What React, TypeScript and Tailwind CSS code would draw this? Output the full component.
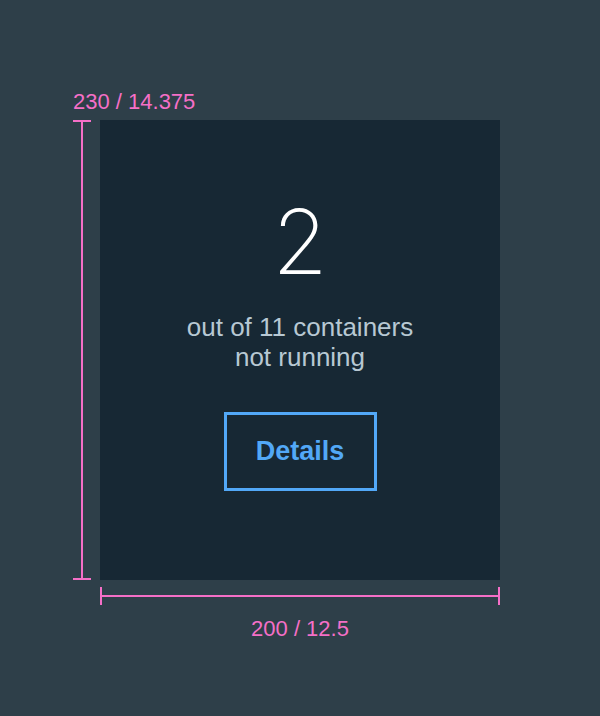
export default function App() {
  return (
    <div className="w-[600px] h-[716px] bg-[#2e3f49] flex flex-col pl-[73px] pt-[89px]" style={{ fontFamily: '"Liberation Sans", Arial, sans-serif' }}>
      <div className="text-[22px] leading-[26px] text-[#f56fc7]">230 / 14.375</div>
      <div className="flex mt-[5px]">
        {/* vertical dimension */}
        <div className="w-[18px] h-[460px] flex flex-col items-center">
          <div className="w-[18px] h-[2px] bg-[#f56fc7]" />
          <div className="w-[2px] flex-1 bg-[#f56fc7]" />
          <div className="w-[18px] h-[2px] bg-[#f56fc7]" />
        </div>
        <div className="ml-[9px] flex flex-col">
          <div className="w-[400px] h-[460px] bg-[#172834] flex flex-col items-center">
            <div className="mt-[77px] text-[90px] leading-[90px] text-white" style={{ fontFamily: 'Inter, sans-serif', fontWeight: 250 }}>2</div>
            <div className="mt-[25px] text-[26px] leading-[30px] text-[#b7c8d3] text-center">
              out of 11 containers
              <br />
              not running
            </div>
            <div className="mt-[40px] w-[153px] h-[79px] border-[3px] border-[#52a8f7] flex items-center justify-center text-[27px] font-bold text-[#52a8f7]">
              Details
            </div>
          </div>
          {/* horizontal dimension */}
          <div className="mt-[7px] w-[400px] h-[18px] flex items-center">
            <div className="w-[2px] h-[18px] bg-[#f56fc7]" />
            <div className="flex-1 h-[2px] bg-[#f56fc7]" />
            <div className="w-[2px] h-[18px] bg-[#f56fc7]" />
          </div>
          <div className="w-[400px] text-center mt-[11px] text-[22px] leading-[26px] text-[#f56fc7]">200 / 12.5</div>
        </div>
      </div>
    </div>
  );
}
